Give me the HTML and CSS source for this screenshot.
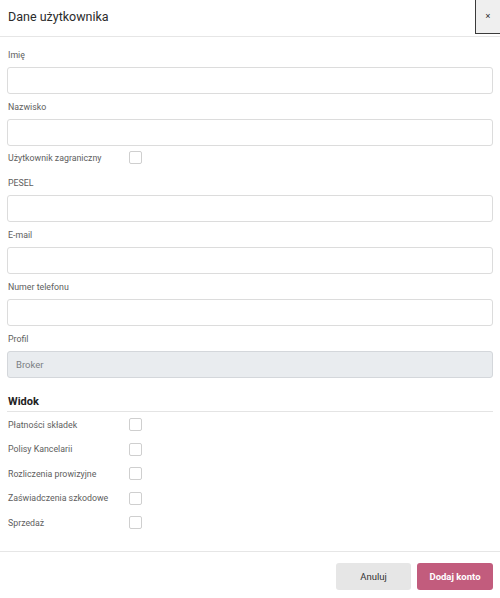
FILE: index.html
```html
<!DOCTYPE html>
<html lang="pl">
<head>
<meta charset="utf-8">
<title>Dane użytkownika</title>
<link rel="stylesheet" href="styles.css">
</head>
<body>
<div class="modal">
  <header class="modal-header">
    <h1 class="modal-title">Dane użytkownika</h1>
    <button class="close-btn" type="button">×</button>
  </header>
  <form class="modal-body">
    <label class="field-label">Imię</label>
    <input class="field-input" type="text">
    <label class="field-label">Nazwisko</label>
    <input class="field-input" type="text">
    <div class="check-row check-row-foreign">
      <span class="check-label">Użytkownik zagraniczny</span>
      <span class="check-box"></span>
    </div>
    <label class="field-label">PESEL</label>
    <input class="field-input" type="text">
    <label class="field-label">E-mail</label>
    <input class="field-input" type="text">
    <label class="field-label">Numer telefonu</label>
    <input class="field-input" type="text">
    <label class="field-label">Profil</label>
    <input class="field-input field-disabled" type="text" value="Broker" disabled>
    <h2 class="section-title">Widok</h2>
    <div class="check-list">
      <div class="check-row"><span class="check-label">Płatności składek</span><span class="check-box"></span></div>
      <div class="check-row"><span class="check-label">Polisy Kancelarii</span><span class="check-box"></span></div>
      <div class="check-row"><span class="check-label">Rozliczenia prowizyjne</span><span class="check-box"></span></div>
      <div class="check-row"><span class="check-label">Zaświadczenia szkodowe</span><span class="check-box"></span></div>
      <div class="check-row"><span class="check-label">Sprzedaż</span><span class="check-box"></span></div>
    </div>
  </form>
  <footer class="modal-footer">
    <button class="btn btn-cancel" type="button">Anuluj</button>
    <button class="btn btn-primary" type="button">Dodaj konto</button>
  </footer>
</div>
</body>
</html>
```

FILE: styles.css
```css
* { box-sizing: border-box; }
html, body {
  margin: 0;
  padding: 0;
  background: #ffffff;
  font-family: Roboto, "Noto Sans", Arial, sans-serif;
  color: #333333;
}
.modal {
  width: 500px;
  height: 598px;
  display: flex;
  flex-direction: column;
}
.modal-header {
  height: 37px;
  display: flex;
  align-items: flex-start;
  justify-content: space-between;
  border-bottom: 1px solid #e6e6e6;
}
.modal-title {
  margin: 0;
  padding: 8px 0 0 8px;
  font-size: 12.5px;
  line-height: 17px;
  font-weight: 400;
  color: #2b2b2b;
}
.close-btn {
  width: 25px;
  height: 34px;
  margin: 0;
  padding: 0;
  border: none;
  border-left: 1px solid #3a3a3a;
  border-bottom: 1px solid #3a3a3a;
  background: #efefef;
  font-family: Arial, sans-serif;
  font-size: 9px;
  color: #222;
  line-height: 1;
}
.modal-body {
  padding: 10px 7px 0 7px;
  display: flex;
  flex-direction: column;
  flex: 1;
}
.field-label {
  display: block;
  margin: 2px 0 6px 1px;
  font-size: 8.8px;
  line-height: 12px;
  color: #5e5e5e;
}
.field-input {
  display: block;
  width: 486px;
  height: 27px;
  margin: 0 0 5px 0;
  padding: 0 8px;
  border: 1px solid #dcdcdc;
  border-radius: 3px;
  background: #fff;
  font-family: Roboto, "Noto Sans", Arial, sans-serif;
  font-size: 9.5px;
  color: #777;
}
.field-disabled {
  background: #e9ecef;
  border-color: #d4d7db;
  color: #7b7f84;
}
.check-row {
  display: flex;
  align-items: center;
  height: 13px;
  padding-left: 1px;
}
.check-row-foreign {
  margin-bottom: 11px;
}
.check-label {
  width: 121px;
  font-size: 8.8px;
  line-height: 12px;
  color: #5e5e5e;
}
.check-box {
  width: 13px;
  height: 13px;
  border: 1px solid #cfcfcf;
  border-radius: 2px;
  background: #fff;
}
.section-title {
  margin: 11px 0 0 0;
  padding: 0 0 1px 1px;
  font-size: 11px;
  line-height: 16px;
  font-weight: 700;
  color: #222;
  border-bottom: 1px solid #e4e4e4;
}
.check-list {
  display: flex;
  flex-direction: column;
  gap: 11.5px;
  margin-top: 6px;
}
.modal-footer {
  height: 47px;
  border-top: 1px solid #e6e6e6;
  display: flex;
  justify-content: flex-end;
  align-items: flex-start;
  gap: 6px;
  padding: 11px 7px 0 0;
}
.btn {
  height: 27px;
  border: none;
  border-radius: 3px;
  font-family: Roboto, "Noto Sans", Arial, sans-serif;
  font-size: 9.5px;
  padding: 0;
}
.btn-cancel {
  width: 75px;
  background: #e6e6e6;
  color: #333;
  font-weight: 400;
}
.btn-primary {
  width: 76px;
  background: #c25c7d;
  color: #fff;
  font-weight: 700;
}
```
